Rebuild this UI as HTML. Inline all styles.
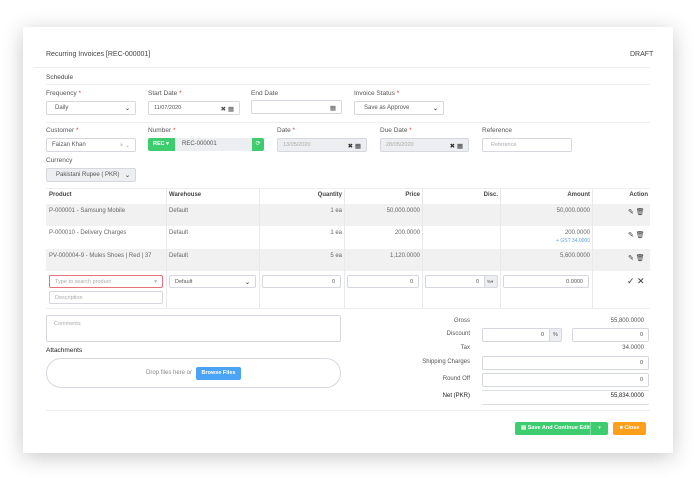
<!DOCTYPE html>
<html><head><meta charset="utf-8"><style>
*{box-sizing:border-box;margin:0;padding:0}
body{width:699px;height:478px;background:#fff;font-family:"Liberation Sans",sans-serif;color:#333;position:relative;overflow:hidden}
.card{position:absolute;left:23px;top:27px;width:650px;height:426px;background:#fff;box-shadow:0 4px 20px rgba(0,0,0,.22)}
.a{position:absolute}
.t{font-size:7px;color:#444;white-space:nowrap}
.lbl{font-size:6.5px;color:#555;white-space:nowrap}
.lbl b{color:#e33;font-weight:normal}
.in{position:absolute;border:1px solid #d5d8de;border-radius:2px;background:#fff;height:14px;font-size:6px;color:#555;padding:3px 5px;white-space:nowrap}
.gray{background:#eceef1}
.hr{position:absolute;height:1px;background:#eceef0}
.r{text-align:right}
.vl{position:absolute;width:1px;background:#e8e9eb}
.ch{float:right;font-weight:bold;font-size:6px}
</style></head><body>
<div class="card"></div>
<div class="a t" style="left:46px;top:51px">Recurring Invoices [REC-000001]</div>
<div class="a t" style="left:630px;top:51px">DRAFT</div>
<div class="hr" style="left:34px;top:67px;width:616px"></div>
<div class="a t" style="left:46px;top:74px;font-size:6.5px">Schedule</div>
<div class="hr" style="left:46px;top:84px;width:604px"></div>

<div class="a lbl" style="left:46px;top:90px">Frequency <b>*</b></div>
<div class="in" style="left:46px;top:101px;width:90px;padding-left:8px">Daily<span class="ch">⌄</span></div>
<div class="a lbl" style="left:148px;top:90px">Start Date <b>*</b></div>
<div class="in" style="left:148px;top:101px;width:92px;font-size:5.5px">11/07/2020<span style="float:right;font-size:6.5px">✖ ▦</span></div>
<div class="a lbl" style="left:251px;top:90px">End Date</div>
<div class="in" style="left:251px;top:100px;width:91px"><span style="float:right;font-size:6.5px">▦</span></div>
<div class="a lbl" style="left:354px;top:90px">Invoice Status <b>*</b></div>
<div class="in" style="left:354px;top:101px;width:90px;padding-left:9px">Save as Approve<span class="ch">⌄</span></div>
<div class="hr" style="left:46px;top:122px;width:604px"></div>

<div class="a lbl" style="left:46px;top:127px">Customer <b>*</b></div>
<div class="in" style="left:46px;top:138px;width:90px">Faizan Khan<span style="float:right;color:#aaa">× ⌄</span></div>
<div class="a lbl" style="left:148px;top:127px">Number <b>*</b></div>
<div class="a" style="left:148px;top:138px;width:27px;height:13px;background:#3dcc6e;border-radius:2px 0 0 2px;color:#fff;font-size:5.5px;padding:3px 5px;font-weight:bold">REC ▾</div>
<div class="a gray" style="left:175px;top:138px;width:77px;height:13px;font-size:6px;padding:3px 7px;color:#555">REC-000001</div>
<div class="a" style="left:252px;top:138px;width:12px;height:13px;background:#3dcc6e;border-radius:0 2px 2px 0;color:#fff;font-size:6px;text-align:center;line-height:13px">⟳</div>
<div class="a lbl" style="left:277px;top:127px">Date <b>*</b></div>
<div class="in gray" style="left:277px;top:138px;width:90px;color:#aaa;font-size:5.5px">13/05/2020<span style="float:right;color:#333;font-size:6.5px">✖ ▦</span></div>
<div class="a lbl" style="left:380px;top:127px">Due Date <b>*</b></div>
<div class="in gray" style="left:380px;top:138px;width:89px;color:#aaa;font-size:5.5px">28/05/2020<span style="float:right;color:#333;font-size:6.5px">✖ ▦</span></div>
<div class="a lbl" style="left:482px;top:127px">Reference</div>
<div class="in" style="left:482px;top:138px;width:90px;color:#aaa;font-size:5.5px;padding-left:8px">Reference</div>
<div class="a lbl" style="left:46px;top:157px">Currency</div>
<div class="in gray" style="left:46px;top:168px;width:90px;padding-left:9px">Pakistani Rupee ( PKR)<span class="ch">⌄</span></div>

<div class="hr" style="left:46px;top:188px;width:604px"></div>
<div class="a" style="left:46px;top:204px;width:604px;height:22px;background:#f1f1f2"></div>
<div class="a" style="left:46px;top:249px;width:604px;height:22px;background:#f1f1f2"></div>
<div class="hr" style="left:46px;top:308px;width:604px"></div>
<div class="vl" style="left:166px;top:188px;height:120px"></div>
<div class="vl" style="left:259px;top:188px;height:120px"></div>
<div class="vl" style="left:344px;top:188px;height:120px"></div>
<div class="vl" style="left:422px;top:188px;height:120px"></div>
<div class="vl" style="left:500px;top:188px;height:120px"></div>
<div class="vl" style="left:592px;top:188px;height:120px"></div>
<div class="a t" style="left:49px;top:192px;font-size:6px;font-weight:bold;color:#444">Product</div>
<div class="a t" style="left:169px;top:192px;font-size:6px;font-weight:bold;color:#444">Warehouse</div>
<div class="a t r" style="left:262px;width:80px;top:192px;font-size:6px;font-weight:bold;color:#444">Quantity</div>
<div class="a t r" style="left:346px;width:74px;top:192px;font-size:6px;font-weight:bold;color:#444">Price</div>
<div class="a t r" style="left:424px;width:74px;top:192px;font-size:6px;font-weight:bold;color:#444">Disc.</div>
<div class="a t r" style="left:502px;width:88px;top:192px;font-size:6px;font-weight:bold;color:#444">Amount</div>
<div class="a t r" style="left:594px;width:54px;top:192px;font-size:6px;font-weight:bold;color:#444">Action</div>

<div class="a t" style="left:49px;top:208px;font-size:6px;color:#666">P-000001 - Samsung Mobile</div>
<div class="a t" style="left:169px;top:208px;font-size:6px;color:#666">Default</div>
<div class="a t r" style="left:262px;width:80px;top:208px;font-size:6px;color:#666">1 ea</div>
<div class="a t r" style="left:346px;width:74px;top:208px;font-size:6px;color:#666">50,000.0000</div>
<div class="a t r" style="left:502px;width:88px;top:208px;font-size:6px;color:#666">50,000.0000</div>
<div class="a t" style="left:628px;top:208px;font-size:7px;color:#333">✎ 🗑</div>

<div class="a t" style="left:49px;top:230px;font-size:6px;color:#666">P-000010 - Delivery Charges</div>
<div class="a t" style="left:169px;top:230px;font-size:6px;color:#666">Default</div>
<div class="a t r" style="left:262px;width:80px;top:230px;font-size:6px;color:#666">1 ea</div>
<div class="a t r" style="left:346px;width:74px;top:230px;font-size:6px;color:#666">200.0000</div>
<div class="a t r" style="left:502px;width:88px;top:230px;font-size:6px;color:#666">200.0000</div>
<div class="a t r" style="left:502px;width:88px;top:238px;font-size:5px;color:#5aa0f0">+ GST 34.0000</div>
<div class="a t" style="left:628px;top:231px;font-size:7px;color:#333">✎ 🗑</div>

<div class="a t" style="left:49px;top:253px;font-size:6px;color:#666">PV-000004-9 - Mules Shoes | Red | 37</div>
<div class="a t" style="left:169px;top:253px;font-size:6px;color:#666">Default</div>
<div class="a t r" style="left:262px;width:80px;top:253px;font-size:6px;color:#666">5 ea</div>
<div class="a t r" style="left:346px;width:74px;top:253px;font-size:6px;color:#666">1,120.0000</div>
<div class="a t r" style="left:502px;width:88px;top:253px;font-size:6px;color:#666">5,600.0000</div>
<div class="a t" style="left:628px;top:254px;font-size:7px;color:#333">✎ 🗑</div>

<div class="in" style="left:49px;top:275px;width:114px;height:13px;border-color:#e8707a;color:#aaa;font-size:5.5px">Type to search product<span style="float:right">▾</span></div>
<div class="in" style="left:49px;top:291px;width:114px;height:13px;color:#aaa;font-size:5.5px">Description</div>
<div class="in" style="left:169px;top:275px;width:87px;height:13px;font-size:5.5px">Default<span class="ch">⌄</span></div>
<div class="in r" style="left:262px;top:275px;width:79px;height:13px;font-size:5.5px">0</div>
<div class="in r" style="left:347px;top:275px;width:72px;height:13px;font-size:5.5px">0</div>
<div class="in r" style="left:425px;top:275px;width:60px;height:13px;font-size:5.5px;border-radius:2px 0 0 2px">0</div>
<div class="in gray" style="left:484px;top:275px;width:14px;height:13px;font-size:4.5px;padding:3px 2px">%▾</div>
<div class="in r" style="left:503px;top:275px;width:86px;height:13px;font-size:5.5px">0.0000</div>
<div class="a t" style="left:627px;top:276px;font-size:9px;color:#333">✓ ✕</div>

<div class="in" style="left:46px;top:315px;width:295px;height:27px;color:#aaa;font-size:5.5px;padding:5px 7px">Comments</div>
<div class="a t" style="left:46px;top:347px;font-size:6.5px;color:#222">Attachments</div>
<div class="a" style="left:46px;top:358px;width:295px;height:30px;border:1px solid #d5d8de;border-radius:15px"></div>
<div class="a t" style="left:146px;top:370px;font-size:6px;color:#888">Drop files here or</div>
<div class="a" style="left:196px;top:367px;width:45px;height:13px;background:#4aa3f5;border-radius:2px;color:#fff;font-size:5.5px;font-weight:bold;text-align:center;line-height:13px">Browse Files</div>

<div class="a t r" style="left:400px;width:70px;top:318px;font-size:6px;color:#555">Gross</div>
<div class="a t r" style="left:572px;width:72px;top:318px;font-size:6px;color:#555">55,800.0000</div>
<div class="a t r" style="left:400px;width:70px;top:331px;font-size:6px;color:#555">Discount</div>
<div class="in r" style="left:482px;top:328px;width:68px;font-size:5.5px">0</div>
<div class="in gray" style="left:549px;top:328px;width:13px;font-size:5.5px;padding:3px 3px">%</div>
<div class="in r" style="left:572px;top:328px;width:77px;font-size:5.5px">0</div>
<div class="a t r" style="left:400px;width:70px;top:345px;font-size:6px;color:#555">Tax</div>
<div class="a t r" style="left:572px;width:72px;top:345px;font-size:6px;color:#555">34.0000</div>
<div class="a t r" style="left:400px;width:70px;top:359px;font-size:6px;color:#555">Shipping Charges</div>
<div class="in r" style="left:482px;top:356px;width:167px;font-size:5.5px">0</div>
<div class="a t r" style="left:400px;width:70px;top:376px;font-size:6px;color:#555">Round Off</div>
<div class="in r" style="left:482px;top:373px;width:167px;font-size:5.5px">0</div>
<div class="hr" style="left:482px;top:390px;width:167px;background:#dcdfe3"></div>
<div class="a t r" style="left:400px;width:70px;top:393px;font-size:6px;color:#222">Net (PKR)</div>
<div class="a t r" style="left:572px;width:72px;top:393px;font-size:6px;color:#222">55,834.0000</div>
<div class="hr" style="left:482px;top:404px;width:167px;background:#dcdfe3"></div>
<div class="hr" style="left:46px;top:410px;width:604px"></div>

<div class="a" style="left:515px;top:422px;width:93px;height:13px;background:#3dcc6e;border-radius:2px;color:#fff;font-size:5.5px;font-weight:bold;line-height:13px;padding-left:6px">▤ Save And Continue Edit</div>
<div class="a" style="left:590px;top:422px;width:1px;height:13px;background:#7ee0a0"></div>
<div class="a" style="left:591px;top:422px;width:17px;height:13px;color:#fff;font-size:5px;text-align:center;line-height:13px">▾</div>
<div class="a" style="left:613px;top:422px;width:33px;height:13px;background:#ff9f1a;border-radius:2px;color:#fff;font-size:5.5px;font-weight:bold;line-height:13px;text-align:center">■ Close</div>
</body></html>
